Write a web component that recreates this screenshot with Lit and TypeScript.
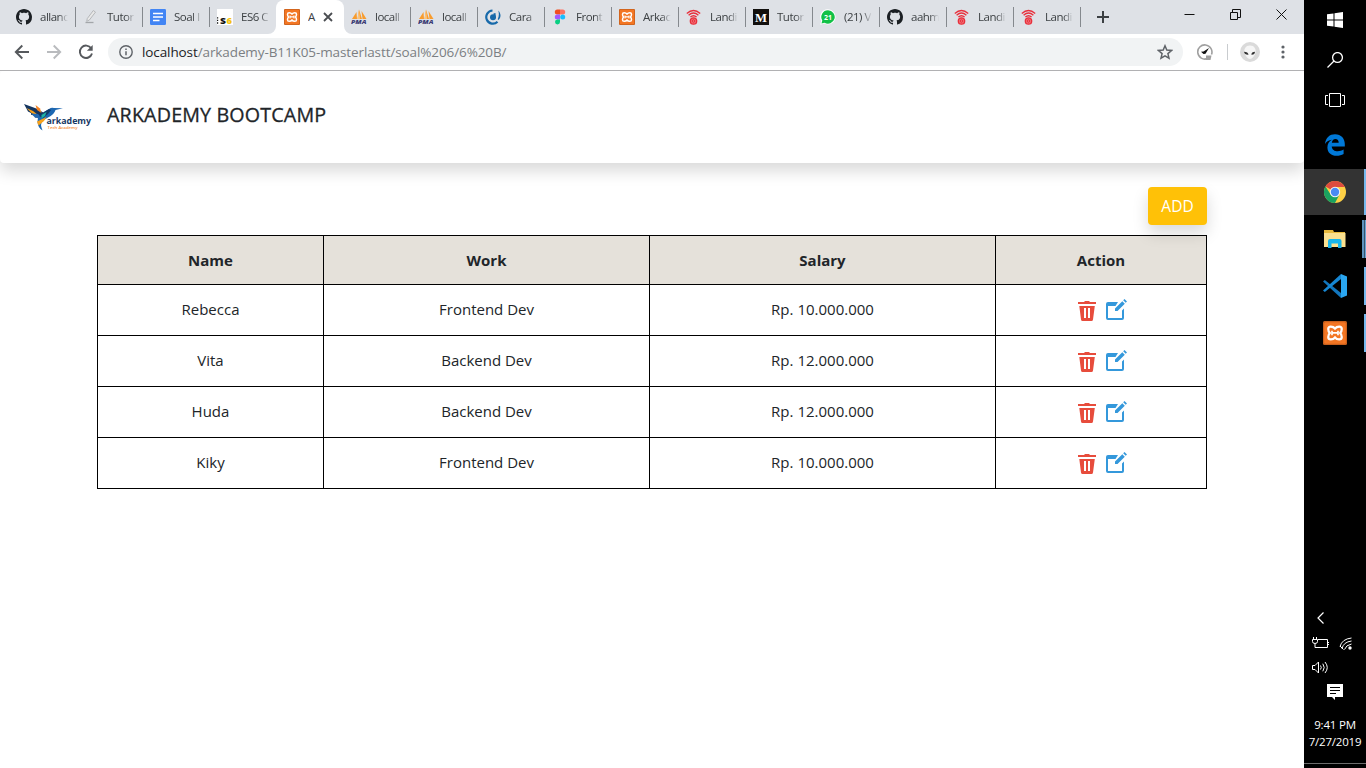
import { LitElement, html, svg, css, nothing } from "lit";
import { customElement, property } from "lit/decorators.js";

const FONT = css`"Open Sans", "Noto Sans", sans-serif`;

const xamppMark = svg`
  <rect x="0" y="0" width="16" height="16" rx="1" fill="#c9601c"/>
  <rect x=".8" y=".8" width="14.400" height="14.400" rx="1" fill="#f37623"/>
  <path d="M8 5Q7 3.700 5.200 3.700 3.500 3.700 3.500 5.300 3.500 6.800 4.500 8 3.500 9.200 3.500 10.700 3.500 12.300 5.200 12.300 7 12.300 8 11 9 12.300 10.800 12.300 12.500 12.300 12.500 10.700 12.500 9.200 11.500 8 12.500 6.800 12.500 5.300 12.500 3.700 10.800 3.700 9 3.700 8 5z" fill="none" stroke="#fff" stroke-width="1.500"/>
  <path d="M6 7.900h4M6 6.500v3M10 6.500v3" stroke="#fff" stroke-width="1.100"/>`;

const github = svg`<path fill="#1b1f23" d="M8 0C3.580 0 0 3.580 0 8c0 3.540 2.290 6.530 5.470 7.590.4.070.55-.17.55-.38 0-.19-.01-.82-.01-1.490-2.010.37-2.530-.49-2.690-.94-.09-.23-.48-.94-.82-1.130-.28-.15-.68-.52-.01-.53.63-.01 1.080.58 1.230.82.72 1.210 1.870.87 2.330.66.07-.52.28-.87.51-1.070-1.780-.2-3.640-.89-3.640-3.950 0-.87.31-1.590.82-2.150-.08-.2-.36-1.020.08-2.120 0 0 .67-.21 2.200.82.64-.18 1.320-.27 2-.27s1.360.09 2 .27c1.530-1.040 2.200-.82 2.200-.82.44 1.100.16 1.920.08 2.120.51.56.82 1.270.82 2.150 0 3.070-1.870 3.750-3.650 3.950.29.25.54.73.54 1.480 0 1.070-.01 1.930-.01 2.200 0 .21.15.46.55.38A8.010 8.010 0 0 0 16 8c0-4.420-3.580-8-8-8z"/>`;

const ICONS: Record<string, unknown> = {
  github,
  xampp: xamppMark,
  pen: svg`<path d="M4.300 9.500 10.300 1.500l2.200 1.600-6.200 8-2.600 1.200z" fill="#e8e8e8" stroke="#b5b7ba" stroke-width="1"/><path d="M2.500 13.500h8" stroke="#a3a6aa" stroke-width="1.300"/>`,
  docs: svg`<rect width="16" height="16" rx="1.200" fill="#4285f4"/><path d="M3 4.500h10M3 8h10M3 11.500h6.500" stroke="#fff" stroke-width="1.700"/>`,
  es6: svg`<rect width="16" height="16" fill="#fff"/><path d="M0 8.900h1.200M0 11.300h1.200M0 14h1.200" stroke="#111" stroke-width="1.300"/><text x="3" y="15" font-size="9" font-weight="800" font-family="Open Sans" fill="#111" textLength="6" lengthAdjust="spacingAndGlyphs">S</text><text x="9.500" y="15" font-size="9" font-weight="800" font-family="Open Sans" fill="#f4c20d" textLength="5.500" lengthAdjust="spacingAndGlyphs">6</text>`,
  pma: svg`<path d="M1 10 5.500 3 6 10zM6.500 10 8 .5 11 10zM11.500 10 10.500 2 15.500 10z" fill="#f89c2e"/><path d="M6.500 10 8 .5 9 10z" fill="#fcc37b"/><text x="0" y="15.300" font-size="5.700" font-style="italic" font-weight="800" font-family="Open Sans" fill="#3c3c75" textLength="15.500" lengthAdjust="spacingAndGlyphs">PMA</text>`,
  cara: svg`<path d="M7.500 1.500A6.600 6.600 0 1 0 12.500 12.800" fill="none" stroke="#1769aa" stroke-width="2.200"/><circle cx="8" cy="8.300" r="3" fill="#1769aa"/><path d="M9.600 4.200v5" stroke="#1769aa" stroke-width="2"/><path d="M13.300 1.500c3 3 2.800 7 .2 9.500l-.8-.8c1.300-2.700 1.500-5.500.6-8.700z" fill="#1769aa"/>`,
  figma: svg`<path d="M8 .5H5.300a2.500 2.500 0 0 0 0 5H8z" fill="#f24e1e"/><path d="M8 .5h2.700a2.500 2.500 0 0 1 0 5H8z" fill="#ff7262"/><path d="M8 5.500H5.300a2.500 2.500 0 0 0 0 5H8z" fill="#a259ff"/><circle cx="10.700" cy="8" r="2.500" fill="#1abcfe"/><path d="M8 10.500H5.300A2.500 2.500 0 1 0 8 13z" fill="#0acf83"/>`,
  wifi: svg`<g fill="none" stroke="#e8303c" stroke-width="1.300"><path d="M.8 4.500Q7.500-1.600 14.200 4.500M2.600 6.300Q7.500 1.800 12.400 6.300M4.400 8.100Q7.500 5.300 10.600 8.100"/><circle cx="7.500" cy="12" r="3.200" fill="#f37178"/><circle cx="7.500" cy="12" r="1.300" stroke-width="1"/></g>`,
  medium: svg`<rect width="16" height="16" fill="#12100e"/><text x="2" y="12.500" font-size="13" font-weight="700" font-family="Liberation Serif" fill="#fff" textLength="12" lengthAdjust="spacingAndGlyphs">M</text>`,
  whatsapp: svg`<path d="M8 .3a7.600 7.600 0 1 1-3.600 14.300L.3 15.700 1.200 11.700A7.600 7.600 0 0 1 8 .3z" fill="#fff"/><path d="M8 1.300a6.700 6.700 0 1 1-3.500 12.400l-3 .8.8-3A6.700 6.700 0 0 1 8 1.300z" fill="#12c147"/><text x="4" y="10.800" font-size="7.500" font-weight="700" font-family="Open Sans" fill="#fff" textLength="8" lengthAdjust="spacingAndGlyphs">21</text>`,
};

interface Tab { icon: string; title: string; active?: boolean; noBar?: boolean }

const TABS: Tab[] = [
  { icon: "github", title: "allanc" },
  { icon: "pen", title: "Tutor" },
  { icon: "docs", title: "Soal I" },
  { icon: "es6", title: "ES6 C", noBar: true },
  { icon: "xampp", title: "A", active: true },
  { icon: "pma", title: "locall" },
  { icon: "pma", title: "locall" },
  { icon: "cara", title: "Cara" },
  { icon: "figma", title: "Front" },
  { icon: "xampp", title: "Arkac" },
  { icon: "wifi", title: "Landi" },
  { icon: "medium", title: "Tutor" },
  { icon: "whatsapp", title: "(21) V" },
  { icon: "github", title: "aahm" },
  { icon: "wifi", title: "Landi" },
  { icon: "wifi", title: "Landi" },
];

@customElement("browser-tab")
class BrowserTab extends LitElement {
  @property({ attribute: false }) tab!: Tab;

  static styles = css`
    :host { display: block; width: 67px; height: 34px; flex: none; }
    .tab { display: flex; align-items: center; height: 34px; box-sizing: border-box; padding-left: 8px; font: 11.5px/16px ${FONT}; color: #3c4043; }
    .icon { width: 16px; height: 16px; flex: none; margin-right: 8px; }
    .title { width: 29px; overflow: hidden; white-space: nowrap; letter-spacing: -0.5px; -webkit-mask-image: linear-gradient(90deg, #000 66%, transparent); }
    .bar { width: 1px; height: 20px; margin-left: 6px; background: #85898e; flex: none; position: relative; left: 1px; }
    .active { background: #fff; border-radius: 8px 8px 0 0; width: 68px; }
    .active .title { width: 10px; margin-right: 5px; -webkit-mask-image: none; }
    .foot { fill: #fff; width: 8px; height: 8px; flex: none; align-self: flex-end; }
    .foot.l { margin-left: -16px; margin-right: 8px; }
    .foot.r { margin-left: 11px; margin-right: -8px; }
    .close { width: 10px; height: 10px; flex: none; stroke: #4a4d51; stroke-width: 1.8; }
  `;

  render() {
    const { icon, title, active, noBar } = this.tab;
    return html`<div class="tab ${active ? "active" : ""}">
      ${active ? html`<svg class="foot l" viewBox="0 0 8 8"><path d="M8 0v8H0a8 8 0 0 0 8-8z"/></svg>` : nothing}
      <svg class="icon" viewBox="0 0 16 16">${ICONS[icon]}</svg>
      <span class="title">${title}</span>
      ${active
        ? html`<svg class="close" viewBox="0 0 10 10"><path d="M1 1l8 8M9 1l-8 8"/></svg>
            <svg class="foot r" viewBox="0 0 8 8"><path d="M0 0v8h8a8 8 0 0 1-8-8z"/></svg>`
        : noBar ? nothing : html`<span class="bar"></span>`}
    </div>`;
  }
}

@customElement("browser-chrome")
class BrowserChrome extends LitElement {
  static styles = css`
    :host { display: block; font-family: ${FONT}; }
    .strip { display: flex; height: 34px; background: #dee1e6; padding-left: 8px; }
    .plus { width: 14px; height: 14px; margin: 10px 0 0 16px; stroke: #3c4043; stroke-width: 2; }
    .win { display: flex; margin-left: auto; margin-right: 17px; gap: 35px; }
    .win svg { width: 11px; height: 11px; margin-top: 9px; fill: none; stroke: #111; stroke-width: 1; }
    .bar { display: flex; align-items: center; height: 36px; background: #fff; border-bottom: 1px solid #b1b1b3; }
    .nav { width: 16px; height: 16px; margin-left: 16px; fill: none; stroke: #56595d; stroke-width: 1.9; }
    .nav.first { margin-left: 14px; }
    .nav.off { stroke: #b9bbbe; }
    .url { display: flex; align-items: center; width: 1075px; height: 28px; margin-left: 14px; border-radius: 14px; background: #f1f3f4; box-sizing: border-box; padding: 0 10px 0 11px; }
    .info { width: 14px; height: 14px; margin-right: 9px; }
    .addr { font-size: 13.5px; line-height: 18px; color: #7b7f83; white-space: nowrap; letter-spacing: -0.1px; }
    .addr b { font-weight: 400; color: #202124; }
    .star { width: 16px; height: 16px; margin-left: auto; fill: none; stroke: #5f6368; stroke-width: 1.5; }
    .ext { width: 16px; height: 16px; margin-left: 14px; }
    .sep { width: 1px; height: 16px; background: #c9cccf; margin-left: 14px; }
    .avatar { width: 20px; height: 20px; margin-left: 12px; }
    .dots { width: 4px; height: 14px; margin-left: 20.5px; fill: #5f6368; }
  `;

  render() {
    return html`
      <div class="strip">
        ${TABS.map((t) => html`<browser-tab .tab=${t}></browser-tab>`)}
        <svg class="plus" viewBox="0 0 14 14"><path d="M7 1v12M1 7h12"/></svg>
        <div class="win">
          <svg viewBox="0 0 11 11"><path d="M.5 5.500h10"/></svg>
          <svg viewBox="0 0 11 11"><path d="M.5 3.500h7v7h-7zM2.500 3V.5h8v8H8"/></svg>
          <svg viewBox="0 0 11 11"><path d="M.5.5l10 10M10.500.5l-10 10"/></svg>
        </div>
      </div>
      <div class="bar">
        <svg class="nav first" viewBox="0 0 16 16"><path d="M15 8H2M8.300 1.500 1.800 8l6.500 6.500"/></svg>
        <svg class="nav off" viewBox="0 0 16 16"><path d="M1 8h13M7.700 1.500 14.200 8l-6.500 6.500"/></svg>
        <svg class="nav" viewBox="0 0 16 16"><path d="M13.200 4.300A6.200 6.200 0 1 0 14 9.500"/><path d="M14.700 1v5.800H8.900z" fill="#56595d" stroke="none"/></svg>
        <div class="url">
          <svg class="info" viewBox="0 0 14 14"><circle cx="7" cy="7" r="6.200" fill="none" stroke="#5f6368" stroke-width="1.400"/><path d="M7 6.300v4M7 3.500v1.500" stroke="#5f6368" stroke-width="1.500"/></svg>
          <span class="addr"><b>localhost</b>/arkademy-B11K05-masterlastt/soal%206/6%20B/</span>
          <svg class="star" viewBox="0 0 16 16"><path d="M8 1.800 9.800 6.100l4.700.4-3.600 3.100 1.100 4.600L8 11.800l-4 2.400 1.100-4.600L1.500 6.500l4.700-.4z"/></svg>
        </div>
        <svg class="ext" viewBox="0 0 16 16"><path d="M10.500 14.600A7.100 7.100 0 1 1 14.500 10.500" fill="none" stroke="#a0a0a0" stroke-width="1.600"/><path d="M9 11.500h5.500l-1 4.500H9z" fill="#a0a0a0"/><path d="M4 7.700 6.500 7.500 12 4 8.500 9.800 6.500 10z" fill="#111"/></svg>
        <span class="sep"></span>
        <svg class="avatar" viewBox="0 0 20 20"><circle cx="10" cy="10" r="10" fill="#dadada"/><path d="M10 3.500c4.500 0 6 3.500 5.600 6.500-.4 3.500-3.500 7-5.600 7s-5.200-3.500-5.600-7C4 7 5.500 3.500 10 3.500z" fill="#f6f6f6"/><path d="M4 9.800c2.700 0 4.300 1.200 4.500 3-2.700.2-4.200-1-4.500-3zM15 9.800c-2.400 0-3.600 1.200-3.600 3 2.400.2 3.500-1 3.600-3z" fill="#333"/></svg>
        <svg class="dots" viewBox="0 0 4 14"><circle cx="2" cy="2" r="1.600"/><circle cx="2" cy="7" r="1.600"/><circle cx="2" cy="12" r="1.600"/></svg>
      </div>`;
  }
}

const ROWS = [
  ["Rebecca", "Frontend Dev", "Rp. 10.000.000"],
  ["Vita", "Backend Dev", "Rp. 12.000.000"],
  ["Huda", "Backend Dev", "Rp. 12.000.000"],
  ["Kiky", "Frontend Dev", "Rp. 10.000.000"],
];

@customElement("salary-page")
class SalaryPage extends LitElement {
  static styles = css`
    :host { display: block; flex: 1; overflow: hidden; background: #fff; color: #212529; font-family: ${FONT}; }
    .navbar { display: flex; height: 92px; box-sizing: border-box; padding: 32px 24px 0; border-radius: 4px; background: #fff; box-shadow: 0 8px 16px rgba(0, 0, 0, 0.15); }
    .logo { width: 68px; height: 27px; margin: 1px 15px 0 0; }
    .brand { font-size: 19.7px; line-height: 24px; font-weight: 500; white-space: nowrap; color: #212529; letter-spacing: 0.15px; -webkit-text-stroke: 0.3px #212529; }
    .content { display: flex; flex-direction: column; padding: 24px 97px 0; }
    .add { position: relative; align-self: flex-end; width: 59px; height: 38px; border: 0; border-radius: 4px; background: #ffc107; color: #fff; font: 15.5px/38px ${FONT}; padding: 0; box-shadow: 0 8px 16px rgba(0, 0, 0, 0.15); }
    .table { display: grid; grid-template-columns: 225px 325px 345px 210px; grid-template-rows: 48px repeat(4, 50px); gap: 1px; padding: 1px; margin-top: 10px; background: #000; }
    .cell { display: flex; align-items: center; justify-content: center; background: #fff; font-size: 15px; line-height: 24px; white-space: nowrap; box-sizing: border-box; padding-bottom: 2px; }
    .head { background: #e5e1da; font-weight: 700; padding-bottom: 0; }
    .bin { width: 18px; height: 20px; margin: 3px 10px 0 2px; }
    .edit { width: 21px; height: 21px; }
  `;

  render() {
    return html`
      <nav class="navbar">
        <svg class="logo" viewBox="0 0 68 27">
          <path d="M0 0 13 4.800 20 9 18 14 11 13.500 10.500 11.500 7 10.800 7 9 4 7.500z" fill="#14355f"/>
          <path d="M2.500 4 9 7 14 11 8 9.500z" fill="#f7a11b"/>
          <path d="M7 9.500 14 10 18 14 11 13.500z" fill="#2268b0"/>
          <path d="M11.500 1l4.500 3.500 1.500 4.500-4.500-3z" fill="#f58220"/>
          <path d="M14 13 20 8 25 5Q27.500 3 30 4L39 4.200 31.500 6Q30 11 24 13.500L19 16.500Q15.500 19.500 18.500 26.500 14 24 13.500 18z" fill="#1d67b1"/>
          <path d="M15 12 20 8 25 5 27 6 24 10 19 14z" fill="#133a69"/>
          <path d="M17.500 11l5-3-1.500 4-3.500 2.500z" fill="#20b3a2"/>
          <path d="M13 17.500 22.500 13 20 17 14.500 21.500z" fill="#f7a11b"/>
          <text x="22.500" y="20" font-family="Open Sans" font-weight="700" font-size="8" fill="#173763" textLength="44.500" lengthAdjust="spacingAndGlyphs">arkademy</text>
          <text x="23.500" y="25" font-family="Open Sans" font-weight="600" font-size="4" fill="#f58a35" textLength="30" lengthAdjust="spacingAndGlyphs">Tech Academy</text>
        </svg>
        <span class="brand">ARKADEMY BOOTCAMP</span>
      </nav>
      <main class="content">
        <button class="add">ADD</button>
        <div class="table">
          ${["Name", "Work", "Salary", "Action"].map((h) => html`<div class="cell head">${h}</div>`)}
          ${ROWS.map((r) => html`
            ${r.map((c) => html`<div class="cell">${c}</div>`)}
            <div class="cell">
              <svg class="bin" viewBox="0 0 18 20" fill="#e74c3c"><path d="M0 1h6.500V0h5v1H18v2H0z"/><path fill-rule="evenodd" d="M1.300 5h15.500L15 18.500q-.2 1.500-1.500 1.500h-9Q3.200 20 3 18.500zM6 7v10h2V7zm4 0v10h2V7z"/></svg>
              <svg class="edit" viewBox="0 0 21 21" fill="#3498db"><path d="M0 5Q0 3 2 3H12L9.500 7H2v12h14V11.500l2-2V19q0 2-2 2H2q-2 0-2-2z"/><path d="M9 9.500 16.300 2.200l2.500 2.500L11.500 12H9zM17.200 1.300 18.500 0 21 2.500 19.700 3.800z"/></svg>
            </div>`)}
        </div>
      </main>`;
  }
}

@customElement("task-bar")
class TaskBar extends LitElement {
  static styles = css`
    :host { display: flex; flex-direction: column; align-items: center; width: 62px; flex: none; height: 768px; background: #000; color: #fff; font-family: ${FONT}; }
    svg { display: block; flex: none; }
    .sys { display: flex; align-items: center; justify-content: center; width: 62px; height: 40px; }
    .edge { height: 49px; }
    .app { display: flex; align-items: center; width: 62px; height: 46px; margin-bottom: 1px; box-sizing: border-box; padding-left: 19px; }
    .app.on { background: #333; }
    .mark { width: 2px; height: 38px; background: #76b9ed; margin-left: auto; }
    .on .mark { height: 46px; }
    .mark.multi { width: 4px; box-sizing: border-box; background: linear-gradient(90deg, #5f93bd 2px, #35546e 2px, #35546e 3px, #6ba4d2 3px); }
    .tray { display: grid; grid-template-columns: 25px 25px; justify-items: center; align-items: center; width: 50px; margin-top: auto; grid-template-rows: 26px 24px 24px; padding-right: 4px; }
    .note { margin-top: 5px; }
    .clock { display: flex; flex-direction: column; align-items: center; font-size: 11.5px; line-height: 17px; letter-spacing: -0.2px; margin-top: 16px; white-space: nowrap; }
    .desk { width: 62px; height: 4px; border-top: 1px solid #6c6c6c; margin-top: 13px; }
  `;

  render() {
    return html`
      <div class="sys"><svg width="16" height="16" viewBox="0 0 16 16" fill="#fff"><path d="M0 2.300 6.500 1.400v6.100H0zM7.500 1.200 16 0v7.500H7.500zM0 8.500h6.500v6.100L0 13.700zM7.500 8.500H16V16l-8.500-1.200z"/></svg></div>
      <div class="sys"><svg width="16" height="16" viewBox="0 0 16 16" fill="none" stroke="#fff" stroke-width="1.300"><circle cx="10.500" cy="5.500" r="4.900"/><path d="M7 9 .5 15.500"/></svg></div>
      <div class="sys"><svg width="20" height="14" viewBox="0 0 20 14" fill="none" stroke="#fff"><path d="M4.500.5h11v13h-11zM3 2.500H.5v9H3M17 2.500h2.500v9H17"/></svg></div>
      <div class="sys edge"><svg width="20" height="22" viewBox="0 0 20 22"><path d="M0 10C.8 3.500 4.800.3 10 .3c6.200 0 9.800 4.300 9.800 9.700v2.400H6.700c.2 3.200 2.900 4.800 6 4.800 2.200 0 4.200-.6 5.900-1.700v4.400c-2 1.200-4.400 1.800-7 1.800-5.300 0-9.200-3.100-9.200-8.300 0-3.500 1.700-6.200 4.600-7.700C4 5.900 1.500 7.300 0 10zM6.800 8.700h6.900c0-2.300-1.100-3.700-3.300-3.700-2 0-3.200 1.500-3.600 3.700z" fill="#0078d7"/></svg></div>
      <div class="app on"><svg width="24" height="24" viewBox="0 0 24 24"><circle cx="12" cy="12" r="11" fill="#fdd045"/><path d="M12 12 2.470 6.500A11 11 0 0 1 21.530 6.500L22 7H12z" fill="#dd4b3e"/><path d="M2.470 6.500A11 11 0 0 0 12 23L16.500 14.500 12 16 7.700 14.500z" fill="#1aa260"/><circle cx="12" cy="12" r="5.200" fill="#f5f5f5"/><circle cx="12" cy="12" r="4.200" fill="#4a8af4"/></svg><span class="mark"></span></div>
      <div class="app"><svg width="24" height="20" viewBox="0 0 24 20"><path d="M1 1h9l1 2h11v15H1z" fill="#e8b93c"/><path d="M1 4h21.500v14H1z" fill="#fbe08f"/><path d="M5 19v-7q0-2 2-2h9.500q2 0 2 2v7h-3.500v-4.500h-6.500V19z" fill="#19b5ea"/></svg><span class="mark multi"></span></div>
      <div class="app"><svg width="24" height="24" viewBox="0 0 24 24"><path d="M0 7.500 1.800 6 18 19v5z" fill="#1276bd"/><path d="M0 16.500 1.800 18 18 5V0z" fill="#1687d3"/><path d="M18 0l6 2.600v18.800L18 24z" fill="#2aa6f0"/></svg><span class="mark"></span></div>
      <div class="app"><svg width="24" height="24" viewBox="0 0 16 16">${xamppMark}</svg><span class="mark"></span></div>
      <div class="tray">
        <svg width="7" height="12" viewBox="0 0 7 12" fill="none" stroke="#fff" stroke-width="1.200"><path d="M6.500.5 1 6l5.500 5.500"/></svg><span></span>
        <svg width="17" height="13" viewBox="0 0 17 13" fill="none" stroke="#fff"><path d="M6 2.500h9.500v8H5.500M16 5.500h1M16 7.500h1M1.500 0v2M4.500 0v2M.5 2.500h5v2q0 2-2.500 2-2.500 0-2.500-2zM3 6.500v4h3"/></svg>
        <svg width="13" height="13" viewBox="0 0 13 13" fill="none" stroke="#fff"><path d="M1 9.500Q3 2 12.500 1M3 11.500Q4.500 5 12.500 4M5.500 12.500Q7 8 12.500 7"/><circle cx="11" cy="11" r="1.700" fill="#fff" stroke="none"/><path d="M1 9 4.500 12.500"/></svg>
        <svg width="17" height="13" viewBox="0 0 17 13" fill="none" stroke="#fff"><path d="M.5 4.500H3L6.500 1v11L3 8.500H.5zM8.500 4.500q1.500 2 0 4M10.800 2.700q2.800 3.800 0 7.600M13 1q4.500 5.500 0 11"/></svg>
      </div>
      <svg class="note" width="16" height="16" viewBox="0 0 16 16"><path d="M0 0h16v13H8v3l-3-3H0z" fill="#fff"/><path d="M3 3.500h10M3 6.500h10M3 9.500h6" stroke="#000"/></svg>
      <div class="clock"><span>9:41 PM</span><span>7/27/2019</span></div>
      <div class="desk"></div>`;
  }
}

@customElement("app-root")
class AppRoot extends LitElement {
  static styles = css`
    :host { display: flex; width: 1366px; height: 768px; overflow: hidden; background: #fff; }
    .browser { display: flex; flex-direction: column; width: 1304px; overflow: hidden; }
  `;

  render() {
    return html`<div class="browser"><browser-chrome></browser-chrome><salary-page></salary-page></div><task-bar></task-bar>`;
  }
}
